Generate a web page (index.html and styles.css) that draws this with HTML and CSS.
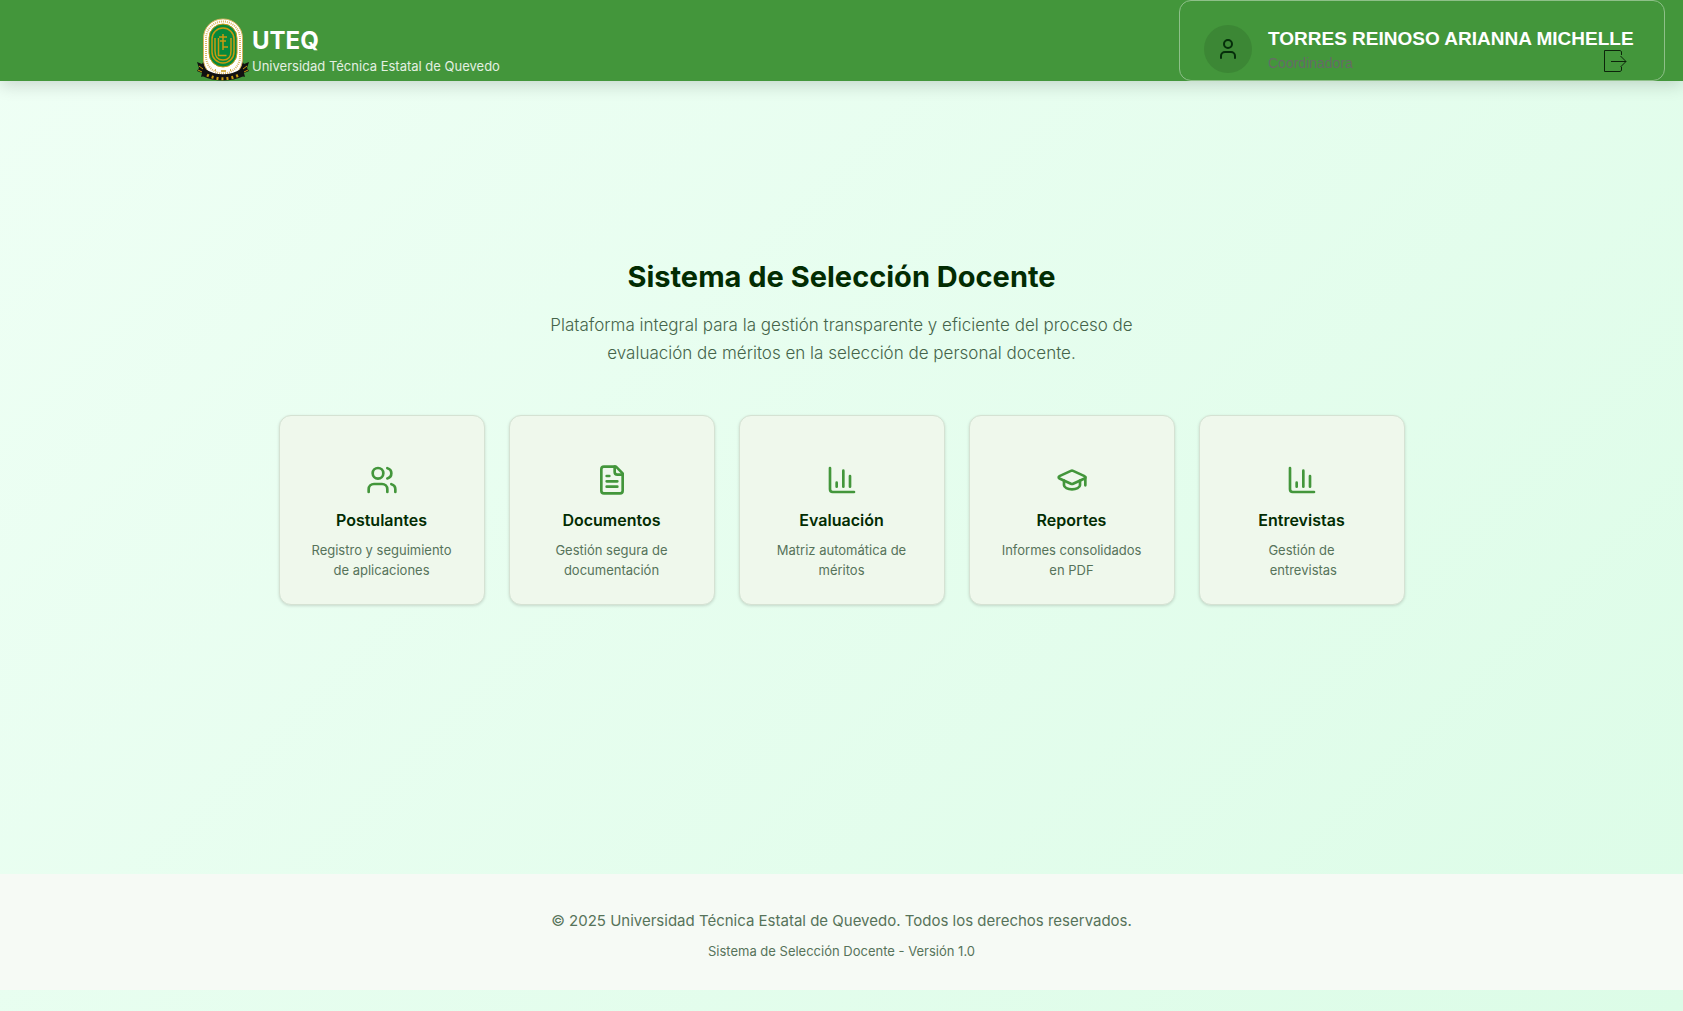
FILE: index.html
```html
<!DOCTYPE html>
<html lang="es">
<head>
<meta charset="utf-8">
<meta name="viewport" content="width=device-width, initial-scale=1">
<title>UTEQ - Sistema de Selección Docente</title>
<link rel="stylesheet" href="styles.css">
</head>
<body>
<header class="topbar">
  <div class="brand">
    <svg class="crest" viewBox="0 0 54 64" role="img" aria-label="Escudo UTEQ">
      <path d="M1 45l5 2 2-3 6 8v8l-6-1-3 1 1-4-5-2 2-3zM53 45l-5 2-2-3-6 8v8l6-1 3 1-1-4 5-2-2-3z" fill="#111"/>
      <rect x="7.500" y="2" width="39" height="59" rx="19" fill="#fff" stroke="#d9b45c"/>
      <rect x="10" y="4.500" width="34" height="52" rx="17" fill="none" stroke="#dcb863" stroke-width="2" stroke-dasharray="1 1"/>
      <rect x="13" y="7" width="28" height="43" rx="14" fill="#07883b" stroke="#c99a10"/>
      <rect x="16" y="11" width="22" height="35" rx="11" fill="none" stroke="#c99a10" stroke-width="1.500"/>
      <path d="M19 21v13c0 6 3 9 8 9s8-3 8-9V21M22.500 21v17.500h8M27 30h5M23 20h8M24 24h6M27 17v16" fill="none" stroke="#c99a10" stroke-width="1.500"/>
      <path d="M19 53h1M25 54h5M34 53h1" stroke="#c99a10" stroke-width="1.500"/>
      <path d="M9 52c11 7 25 7 36 0l3 7c-13 6-29 6-42 0z" fill="#111"/>
      <path d="M11 58c10 5 22 5 32 0" fill="none" stroke="#c99a10" stroke-width="3" stroke-dasharray="2 3"/>
      <path d="M3 49l4 3M2 53l4 2M51 49l-4 3M52 53l-4 2" stroke="#c99a10"/>
    </svg>
    <div>
      <p class="brand-name">UTEQ</p>
      <p class="brand-sub">Universidad Técnica Estatal de Quevedo</p>
    </div>
  </div>
  <div class="user">
    <span class="avatar">
      <svg class="icon icon-user" viewBox="0 0 24 24" aria-hidden="true"><path d="M19 21v-2a4 4 0 0 0-4-4H9a4 4 0 0 0-4 4v2"/><circle cx="12" cy="7" r="4"/></svg>
    </span>
    <div>
      <p class="user-name">TORRES REINOSO ARIANNA MICHELLE</p>
      <p class="user-role">Coordinadora</p>
    </div>
    <button class="logout" type="button" aria-label="Cerrar sesión">
      <svg viewBox="0 0 24 24" aria-hidden="true"><path d="M18.500 6V2.500L17 1.500H1.500v21H17l1.500-1V18"/><path d="M8 12.500h15M17.500 7l5.500 5.500-5.500 5.500"/></svg>
    </button>
  </div>
</header>
<main class="hero">
  <h1>Sistema de Selección Docente</h1>
  <p class="lead">Plataforma integral para la gestión transparente y eficiente del proceso de evaluación de méritos en la selección de personal docente.</p>
  <div class="cards">
    <article class="card">
      <svg class="icon" viewBox="0 0 24 24" aria-hidden="true"><path d="M16 21v-2a4 4 0 0 0-4-4H6a4 4 0 0 0-4 4v2"/><circle cx="9" cy="7" r="4"/><path d="M22 21v-2a4 4 0 0 0-3-3.870M16 3.130a4 4 0 0 1 0 7.750"/></svg>
      <h2>Postulantes</h2>
      <p>Registro y seguimiento de aplicaciones</p>
    </article>
    <article class="card">
      <svg class="icon" viewBox="0 0 24 24" aria-hidden="true"><path d="M15 2H6a2 2 0 0 0-2 2v16a2 2 0 0 0 2 2h12a2 2 0 0 0 2-2V7Z"/><path d="M14 2v4a2 2 0 0 0 2 2h4M10 9H8M16 13H8M16 17H8"/></svg>
      <h2>Documentos</h2>
      <p>Gestión segura de documentación</p>
    </article>
    <article class="card">
      <svg class="icon" viewBox="0 0 24 24" aria-hidden="true"><path d="M3 3v16a2 2 0 0 0 2 2h16M18 17V9M13 17V5M8 17v-3"/></svg>
      <h2>Evaluación</h2>
      <p>Matriz automática de méritos</p>
    </article>
    <article class="card">
      <svg class="icon" viewBox="0 0 24 24" aria-hidden="true"><path d="M21.420 10.922a1 1 0 0 0-.019-1.838L12.830 5.180a2 2 0 0 0-1.660 0L2.600 9.080a1 1 0 0 0 0 1.832l8.570 3.908a2 2 0 0 0 1.660 0z"/><path d="M22 10v6M6 12.500V16a6 3 0 0 0 12 0v-3.500"/></svg>
      <h2>Reportes</h2>
      <p>Informes consolidados en PDF</p>
    </article>
    <article class="card">
      <svg class="icon" viewBox="0 0 24 24" aria-hidden="true"><path d="M3 3v16a2 2 0 0 0 2 2h16M18 17V9M13 17V5M8 17v-3"/></svg>
      <h2>Entrevistas</h2>
      <p>Gestión de<br>&nbsp;entrevistas</p>
    </article>
  </div>
</main>
<footer class="footer">
  <p>© 2025 Universidad Técnica Estatal de Quevedo. Todos los derechos reservados.</p>
  <p class="version">Sistema de Selección Docente - Versión 1.0</p>
</footer>
</body>
</html>
```
FILE: styles.css
```css
* {
  box-sizing: border-box;
}

body {
  margin: 0;
  min-height: 100vh;
  padding-bottom: 21px;
  display: flex;
  flex-direction: column;
  font-family: Inter, sans-serif;
  color: #052e0a;
  background: linear-gradient(135deg, #effff5, #dcfce7);
}

h1, h2, p {
  margin: 0;
}

.topbar {
  display: flex;
  justify-content: space-between;
  align-items: stretch;
  min-height: 81px;
  padding: 0 18px 0 196px;
  background: #43963b;
  box-shadow: 0 4px 16px rgba(0, 0, 0, 0.16);
}

.brand {
  display: flex;
  align-items: flex-end;
  color: #fff;
}

.crest {
  display: block;
  width: 54px;
  height: 64px;
}

.brand > div {
  padding: 0 0 5px 2px;
}

.brand-name {
  font-size: 24px;
  line-height: 31px;
  font-weight: 700;
}

.brand-sub {
  font-size: 13px;
  line-height: 20px;
  color: #e3f0e2;
}

.user {
  position: relative;
  display: flex;
  align-items: flex-end;
  gap: 16px;
  min-width: 486px;
  padding: 0 24px 7px;
  border: 1px solid #8ec089;
  border-radius: 12px;
  font-family: "Liberation Sans", Arial, sans-serif;
}

.avatar {
  display: grid;
  place-items: center;
  width: 48px;
  height: 48px;
  border-radius: 50%;
  background: #3c8735;
}

.icon {
  width: 32px;
  height: 32px;
  fill: none;
  stroke: #43963b;
  stroke-width: 2;
  stroke-linecap: round;
  stroke-linejoin: round;
}

.icon-user {
  width: 24px;
  height: 24px;
  stroke: #052e0a;
}

.user-name {
  font-size: 19px;
  line-height: 28px;
  font-weight: 700;
  color: #fff;
}

.user-role {
  font-size: 14px;
  line-height: 20px;
  color: #666c66;
}

.logout {
  position: absolute;
  right: 37px;
  bottom: 7px;
  width: 24px;
  height: 24px;
  padding: 0;
  border: 0;
  background: none;
}

.logout svg {
  display: block;
  width: 24px;
  height: 24px;
  fill: none;
  stroke: #0c240a;
  stroke-width: 1;
}

.hero {
  flex: 1;
  display: flex;
  flex-direction: column;
  align-items: center;
  padding: 178px 24px 24px;
  text-align: center;
}

h1 {
  font-size: 29px;
  line-height: 36px;
  font-weight: 700;
  color: #022c02;
}

.lead {
  max-width: 640px;
  margin: 16px 0 48px;
  font-size: 17px;
  line-height: 28px;
  font-weight: 300;
  color: #45644a;
}

.cards {
  display: grid;
  grid-template-columns: repeat(5, 1fr);
  gap: 24px;
  width: 100%;
  max-width: 1126px;
}

.card {
  padding: 48px 24px 24px;
  border: 1px solid #d5e2d3;
  border-radius: 12px;
  background: #eff8ec;
  box-shadow: 0 1px 3px rgba(0, 0, 0, 0.15);
}

.card .icon {
  display: block;
  margin: 0 auto 12px;
}

.card h2 {
  margin-bottom: 8px;
  font-size: 16px;
  line-height: 24px;
  font-weight: 600;
  color: #022c02;
}

.card p {
  font-size: 13px;
  line-height: 20px;
  color: #56735a;
}

.footer {
  padding: 35px 24px 29px;
  text-align: center;
  font-size: 15px;
  line-height: 24px;
  color: #56735a;
  background: #f6faf5;
}

.version {
  margin-top: 8px;
  font-size: 13px;
  line-height: 20px;
}
```
